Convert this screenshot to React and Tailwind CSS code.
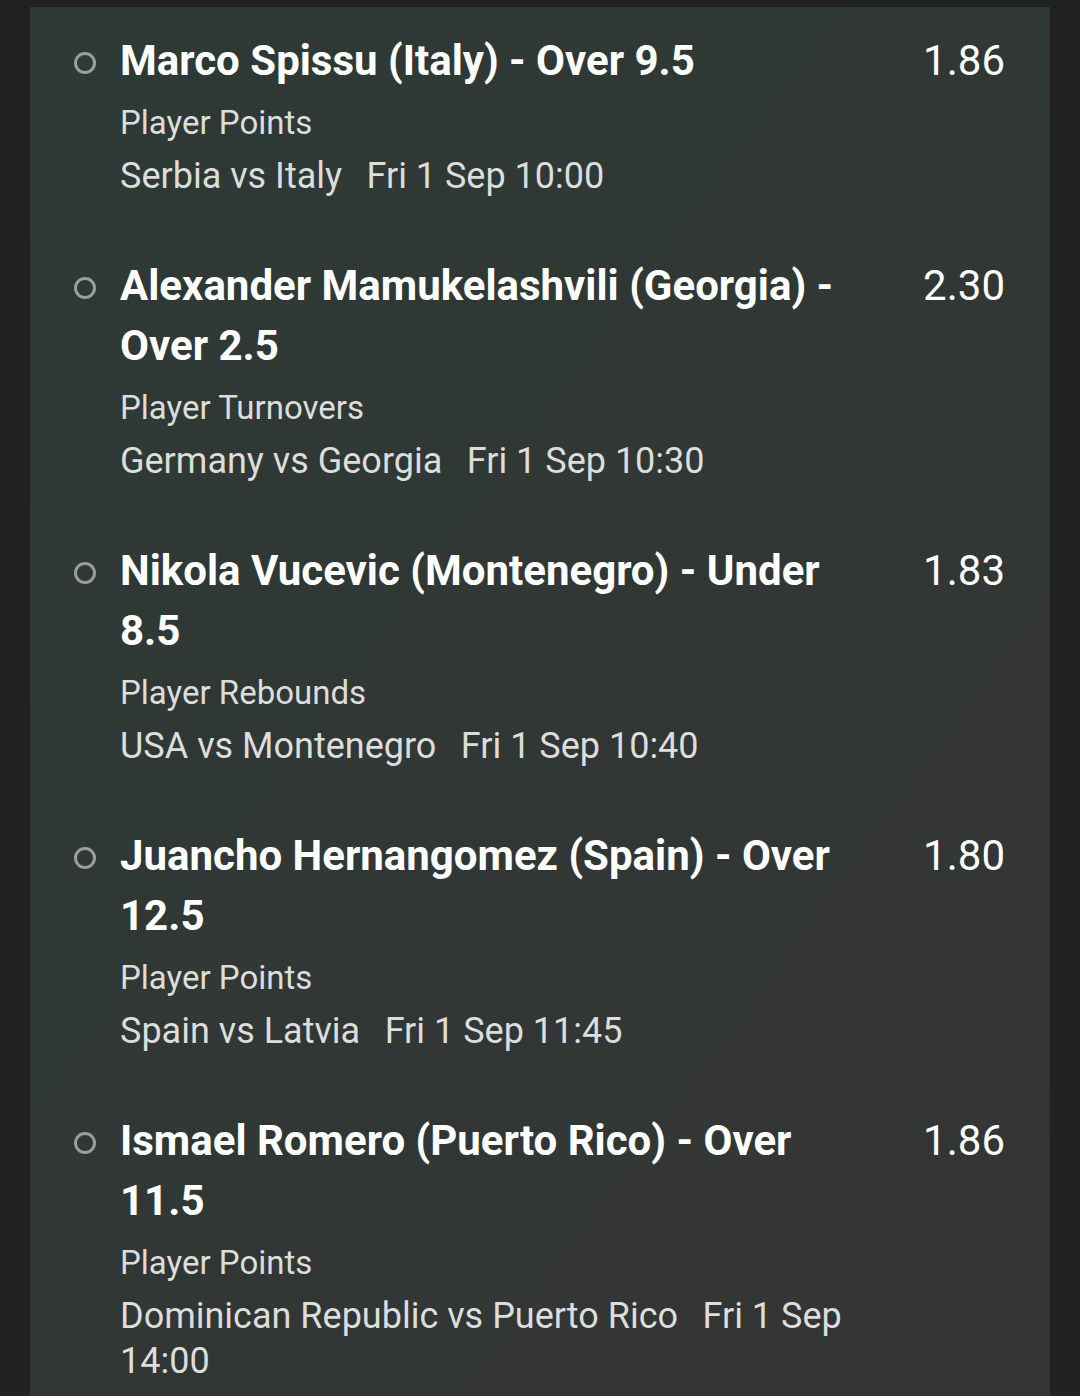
import React from 'react';

const bets = [
  { title: 'Marco Spissu (Italy) - Over 9.5', odds: '1.86', market: 'Player Points', match: 'Serbia vs Italy', time: 'Fri 1 Sep 10:00' },
  { title: 'Alexander Mamukelashvili (Georgia) - Over 2.5', odds: '2.30', market: 'Player Turnovers', match: 'Germany vs Georgia', time: 'Fri 1 Sep 10:30' },
  { title: 'Nikola Vucevic (Montenegro) - Under 8.5', odds: '1.83', market: 'Player Rebounds', match: 'USA vs Montenegro', time: 'Fri 1 Sep 10:40' },
  { title: 'Juancho Hernangomez (Spain) - Over 12.5', odds: '1.80', market: 'Player Points', match: 'Spain vs Latvia', time: 'Fri 1 Sep 11:45' },
  { title: 'Ismael Romero (Puerto Rico) - Over 11.5', odds: '1.86', market: 'Player Points', match: 'Dominican Republic vs Puerto Rico', time: 'Fri 1 Sep 14:00' },
];

const BetRow = ({ bet }) => (
  <li className="flex items-start">
    {/* bullet */}
    <div className="w-[90px] shrink-0 flex justify-end pr-[24px] pt-[21px]">
      <div className="w-[22px] h-[22px] rounded-full border-[3px] border-[#9c9e9d]" />
    </div>
    <div className="w-[740px] shrink-0">
      <div className="text-[42px] leading-[60px] font-bold text-white">{bet.title}</div>
      <div className="mt-[9px] text-[33px] leading-[45px] text-[#dcdddc]">{bet.market}</div>
      <div className="mt-[9px] text-[36px] leading-[45px] text-[#dcdddc]">
        {bet.match + '\u2002\u2006' + bet.time}
      </div>
    </div>
    <div className="flex-1 text-right pr-[45px] text-[42px] leading-[60px] text-white">{bet.odds}</div>
  </li>
);

export default function App() {
  return (
    <div className="min-h-[1396px] bg-[#222222] px-[30px] pt-[7px]" style={{ fontFamily: 'Roboto, "Noto Sans", sans-serif' }}>
      <div className="min-h-[1389px] bg-linear-to-br from-[#2d3a35] via-[#313735] to-[#343535] pt-[24px] pb-[10px]">
        <ul className="flex flex-col gap-[57px]">
          {bets.map((bet, i) => (
            <BetRow key={i} bet={bet} />
          ))}
        </ul>
      </div>
    </div>
  );
}
